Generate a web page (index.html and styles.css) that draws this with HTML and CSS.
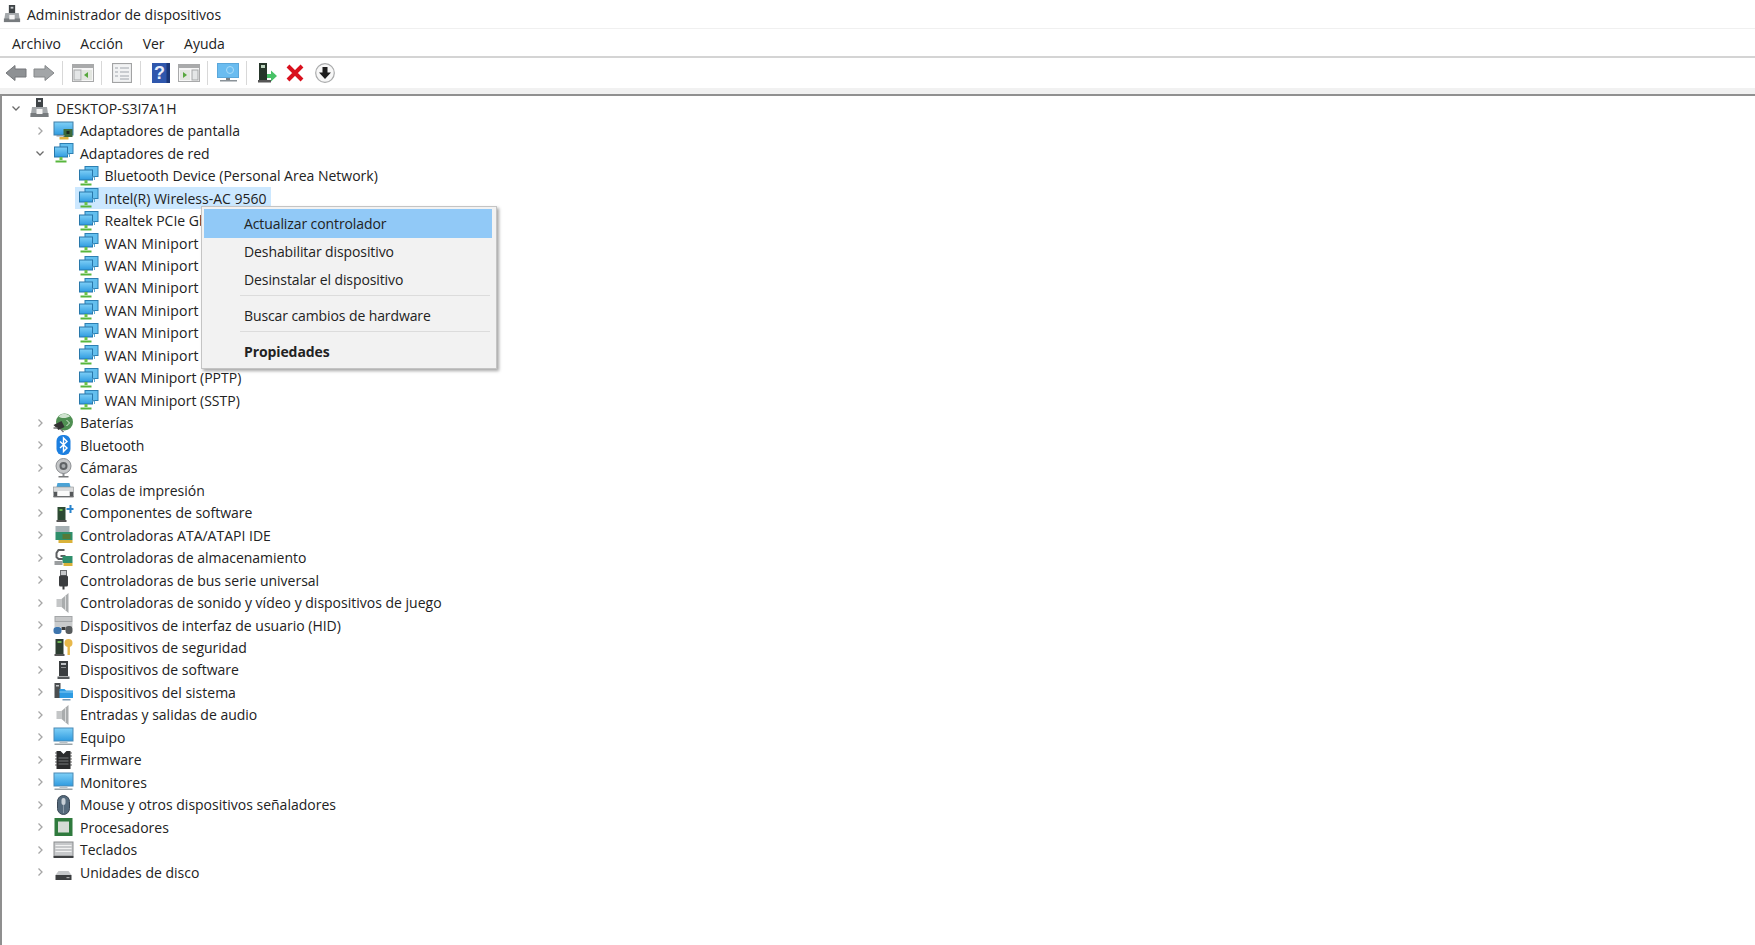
FILE: index.html
```html
<!DOCTYPE html>
<html lang="es">
<head>
<meta charset="utf-8">
<title>Administrador de dispositivos</title>
<link rel="stylesheet" href="styles.css">
</head>
<body>
<svg class="sprite" width="0" height="0" aria-hidden="true">
<defs>
<linearGradient id="scr" x1="0" y1="0" x2="0" y2="1"><stop offset="0" stop-color="#7fd0f7"/><stop offset="1" stop-color="#2f9be0"/></linearGradient>
<symbol id="i-computer" viewBox="0 0 20 20"><rect x="6.500" y="0" width="7" height="10" fill="#3f4447"/><rect x="8.500" y="2" width="3" height="2" fill="#c8ccd0"/><path d="M2.500 9h15l1.500 10H1z" fill="#a4a8ab"/><rect x="1" y="15" width="18" height="4" fill="#777b7e"/><rect x="7" y="11" width="6" height="5" fill="#f4f4f4"/></symbol>
<symbol id="i-display" viewBox="0 0 20 20"><rect x="0.500" y="1" width="19" height="13" fill="url(#scr)" stroke="#3f7ea8"/><rect x="10" y="8" width="9" height="8" fill="#3d6b3a"/><rect x="13" y="10" width="3" height="3" fill="#1d2a1d"/><rect x="6" y="16" width="9" height="2.500" fill="#e2b33d"/><rect x="3" y="14" width="8" height="1.500" fill="#8b9aa3"/></symbol>
<symbol id="i-net" viewBox="0 0 20 20"><rect x="6.500" y="0.500" width="13" height="10" fill="#63bfee" stroke="#2d7fb2"/><rect x="1" y="4" width="13" height="10" fill="url(#scr)" stroke="#2877aa"/><rect x="6" y="14" width="3" height="3" fill="#6cc24a"/><path d="M2 18.500h11" stroke="#58b63d" stroke-width="2"/><path d="M13 11h3v3" stroke="#5aaad6" fill="none"/></symbol>
<symbol id="i-battery" viewBox="0 0 20 20"><circle cx="11" cy="9" r="8.500" fill="#4f8f52"/><path d="M5 3.500c4-4 9-3 11.500 0-3 1.500-8 2.500-11.500 0z" fill="#cfe3cf"/><path d="M0 12l8-4 3 6-6 3z" fill="#333"/><path d="M0 15h4M7 16l3 3" stroke="#777" stroke-width="1.500"/><path d="M13 7l3 3-3 3" stroke="#d8ecd8" fill="none"/></symbol>
<symbol id="i-bt" viewBox="0 0 20 20"><rect x="3" y="0" width="14" height="20" rx="6" fill="#1c7fe0"/><path d="M6.500 6.500l7 6.500-3.500 3.500V3l3.500 3.500-7 6.500" stroke="#fff" stroke-width="1.400" fill="none"/></symbol>
<symbol id="i-cam" viewBox="0 0 20 20"><circle cx="10" cy="8" r="7.500" fill="#c4c6c8" stroke="#8c8f92"/><circle cx="10" cy="8" r="4" fill="#5f6366"/><circle cx="10" cy="8" r="2" fill="#a6aaad"/><path d="M10 15v3" stroke="#8c8f92" stroke-width="2"/><rect x="5" y="18" width="10" height="1.500" fill="#77797b"/></symbol>
<symbol id="i-printer" viewBox="0 0 20 20"><path d="M4 3h12l1 4H3z" fill="#4ba3d6"/><rect x="0" y="7" width="20" height="5" fill="#d9dadb" stroke="#8d8f91" stroke-width=".6"/><rect x="0" y="12" width="4" height="5" fill="#55585a"/><rect x="16" y="12" width="4" height="5" fill="#55585a"/><rect x="4" y="11" width="12" height="5" fill="#fafafa"/><rect x="0" y="16" width="20" height="1.400" fill="#6b6d6f"/></symbol>
<symbol id="i-comp" viewBox="0 0 20 20"><rect x="4" y="4" width="8" height="14" fill="#2d4a33"/><rect x="6" y="6" width="3" height="2" fill="#68b34f"/><rect x="3" y="17" width="10" height="2" fill="#555"/><path d="M13 5h3V2h2v3h2v2h-2v3h-2V7h-3z" fill="#2a84cc"/></symbol>
<symbol id="i-ata" viewBox="0 0 20 20"><rect x="2" y="1" width="14" height="6" fill="#a6b0b4"/><rect x="2" y="7" width="17" height="8" fill="#2f8f6c"/><rect x="9" y="9" width="8" height="5" fill="#567a37"/><rect x="5" y="15" width="14" height="3" fill="#d9b23a"/></symbol>
<symbol id="i-store" viewBox="0 0 20 20"><path d="M11 2H5L3 5v4l2 2h6V8H7" stroke="#5c5f61" stroke-width="2" fill="none"/><rect x="9" y="8" width="10" height="7" fill="#2f8f6c"/><rect x="1" y="13" width="8" height="4" fill="#9a9d9f"/><rect x="10" y="15" width="9" height="3" fill="#d9b23a"/></symbol>
<symbol id="i-usb" viewBox="0 0 20 20"><rect x="7" y="0.500" width="6" height="5" fill="#c7c9cb" stroke="#6a6c6e"/><rect x="5.500" y="5.500" width="9" height="11" rx="1.500" fill="#3b3d3f"/><rect x="9" y="16" width="2" height="3.500" fill="#3b3d3f"/></symbol>
<symbol id="i-sound" viewBox="0 0 20 20"><rect x="3" y="6" width="5" height="8" fill="#c4c6c7"/><path d="M8 6l7-6v20l-7-6z" fill="#a9acad"/><path d="M12 3v14" stroke="#d9dadb"/></symbol>
<symbol id="i-hid" viewBox="0 0 20 20"><rect x="1" y="1" width="18" height="6" fill="#a3a6a8"/><path d="M2 3h16M2 5h16" stroke="#e8e8e8"/><rect x="1" y="7" width="18" height="5" fill="#c9cbcc"/><rect x="0" y="12" width="8" height="7" rx="3" fill="#3d75ad"/><rect x="12" y="11" width="7" height="8" rx="3" fill="#565a5c"/><rect x="8" y="12" width="4" height="3" fill="#3a3c3d"/></symbol>
<symbol id="i-sec" viewBox="0 0 20 20"><rect x="2" y="2" width="8" height="15" fill="#2c3c30"/><rect x="4" y="4" width="4" height="2" fill="#6cb452"/><rect x="1" y="17" width="10" height="2" fill="#555"/><circle cx="15" cy="6" r="4" fill="#e8b84a"/><rect x="14" y="9" width="2.400" height="9" fill="#e8b84a"/></symbol>
<symbol id="i-soft" viewBox="0 0 20 20"><rect x="5.500" y="1" width="9" height="15" fill="#3a3d3f"/><rect x="7.500" y="3" width="5" height="2" fill="#c0c3c5"/><rect x="7.500" y="7" width="5" height="1" fill="#8e9193"/><rect x="4" y="16.500" width="12" height="2.500" fill="#55585a"/></symbol>
<symbol id="i-sys" viewBox="0 0 20 20"><rect x="1" y="1" width="6" height="15" fill="#4b4e50"/><rect x="2.500" y="3" width="3" height="1.500" fill="#c4c6c8"/><path d="M6 7h5l1.500 1.500H19.500V16H6z" fill="#2d9be2"/><path d="M6 10h13.500" stroke="#86cdf5"/><rect x="9" y="17" width="8" height="1.500" fill="#7a9bb5"/></symbol>
<symbol id="i-mon" viewBox="0 0 20 20"><rect x="0.500" y="1" width="19" height="13" fill="url(#scr)" stroke="#4a8ab5"/><rect x="6" y="14.500" width="8" height="1.500" fill="#b8c0c5"/><rect x="1" y="16.500" width="18" height="1.500" fill="#9aa3a8"/></symbol>
<symbol id="i-fw" viewBox="0 0 20 20"><rect x="3" y="1" width="14" height="18" fill="#2b2c2d"/><path d="M3 3h-1M3 6h-1M3 9h-1M3 12h-1M3 15h-1M18 3h-1M18 6h-1M18 9h-1M18 12h-1M18 15h-1" stroke="#333" stroke-width="1.500"/><path d="M7 1l3 3 3-3z" fill="#fff"/><path d="M5 8h10M5 11h10M5 14h10" stroke="#77797b"/></symbol>
<symbol id="i-mouse" viewBox="0 0 20 20"><rect x="4" y="0.500" width="12" height="19" rx="6" fill="#556a7c" stroke="#3a4856"/><rect x="8" y="3" width="4" height="7" rx="2" fill="#c9d1d8"/><path d="M10 10v8" stroke="#8b9aa8"/></symbol>
<symbol id="i-cpu" viewBox="0 0 20 20"><rect x="1" y="1" width="18" height="18" fill="#2f7a3d"/><rect x="4.500" y="4.500" width="11" height="11" fill="#d6dcd6"/></symbol>
<symbol id="i-kbd" viewBox="0 0 20 20"><rect x="0.500" y="2" width="19" height="14" fill="#c7c9cb" stroke="#8b8d8f"/><path d="M2 5.500h16M2 8.500h16M2 11.500h16" stroke="#f2f2f2"/><rect x="0" y="16" width="20" height="2" fill="#3f4143"/></symbol>
<symbol id="i-disk" viewBox="0 0 20 20"><path d="M5 9h10l3 4H2z" fill="#c6c8ca"/><rect x="2" y="13" width="16" height="5" fill="#3c3e40"/><rect x="13" y="15" width="3" height="1.200" fill="#aaa"/></symbol>
<symbol id="t-back" viewBox="0 0 22 18"><path d="M1 9L10 1.500V5h11v8H10v3.500z" fill="#8e9194" stroke="#74777a"/></symbol>
<symbol id="t-fwd" viewBox="0 0 22 18"><path d="M21 9L12 1.500V5H1v8h11v3.500z" fill="#a3a6a8" stroke="#85888a"/></symbol>
<symbol id="t-win1" viewBox="0 0 22 18"><rect x="0.500" y="0.500" width="21" height="17" fill="#f6f6f6" stroke="#a8a9aa"/><rect x="1" y="1" width="20" height="3" fill="#a9aaab"/><rect x="2" y="6" width="7" height="10" fill="#e4e6e7" stroke="#a6a8a9"/><rect x="10" y="6" width="10" height="10" fill="#e3e6e0"/><path d="M16 8v6l-4-3z" fill="#58a83e"/></symbol>
<symbol id="t-list" viewBox="0 0 20 20"><rect x="0.500" y="0.500" width="19" height="19" fill="#f2f3f4" stroke="#a2a3a4" stroke-width="1.200"/><path d="M3 5h3M3 9h3M3 13h3M8 5h9M8 9h9M8 13h9M8 16h9" stroke="#bcc0c3" stroke-width="1.300"/></symbol>
<symbol id="t-help" viewBox="0 0 18 20"><rect x="0" y="0" width="18" height="20" fill="#2f57ad"/><rect x="14.500" y="0" width="3.500" height="20" fill="#1c3879"/><text x="7.500" y="16" font-family="Liberation Sans, sans-serif" font-size="18" font-weight="700" fill="#e9eefa" text-anchor="middle">?</text></symbol>
<symbol id="t-win2" viewBox="0 0 22 18"><rect x="0.500" y="0.500" width="21" height="17" fill="#f6f6f6" stroke="#a8a9aa"/><rect x="1" y="1" width="20" height="3" fill="#a9aaab"/><rect x="2" y="6" width="10" height="10" fill="#e3e6e0"/><path d="M5 8v6l4-3z" fill="#58a83e"/><rect x="14" y="6" width="6" height="10" fill="#e4e6e7" stroke="#a6a8a9"/></symbol>
<symbol id="t-mon" viewBox="0 0 22 20"><rect x="0.500" y="0.500" width="21" height="14" fill="#6abcf0" stroke="#5ba7da"/><circle cx="13" cy="7" r="3.500" fill="none" stroke="#a9dcf9"/><rect x="9" y="15" width="4" height="2" fill="#7a8288"/><rect x="3" y="17" width="17" height="1.500" fill="#8a9298"/></symbol>
<symbol id="t-inst" viewBox="0 0 22 20"><rect x="3" y="0" width="8" height="17" fill="#26362a"/><rect x="5" y="2" width="4" height="3" fill="#bcd4be"/><rect x="2" y="17" width="13" height="2.500" fill="#555"/><path d="M11 11h4V7.500l6 5.500-6 5.500V15h-4z" fill="#48c267"/></symbol>
<symbol id="t-x" viewBox="0 0 18 18"><path d="M2 2l14 14M16 2L2 16" stroke="#d9101d" stroke-width="4"/></symbol>
<symbol id="t-down" viewBox="0 0 20 20"><circle cx="10" cy="10" r="9.300" fill="#f7f7f7" stroke="#a9aaab" stroke-width="1.200"/><path d="M7.500 4h5v5.500H16L10 16 4 9.500h3.500z" fill="#1e1e1e"/></symbol>
<symbol id="c-right" viewBox="0 0 10 10"><path d="M3.500 1.500L7 5 3.500 8.500" fill="none" stroke="#a6a6a6" stroke-width="1.300"/></symbol>
<symbol id="c-down" viewBox="0 0 10 10"><path d="M1.500 3.500L5 7l3.500-3.500" fill="none" stroke="#6b6b6b" stroke-width="1.300"/></symbol>
</defs>
</svg>

<div class="window">
  <header class="titlebar">
    <svg class="title-icon"><use href="#i-computer"/></svg>
    <span>Administrador de dispositivos</span>
  </header>
  <nav class="menubar">
    <span class="menu-item">Archivo</span>
    <span class="menu-item">Acción</span>
    <span class="menu-item">Ver</span>
    <span class="menu-item">Ayuda</span>
  </nav>
  <div class="toolbar">
    <span class="tool"><svg class="w22"><use href="#t-back"/></svg></span>
    <span class="tool"><svg class="w22"><use href="#t-fwd"/></svg></span>
    <i class="sep"></i>
    <span class="tool"><svg class="w22"><use href="#t-win1"/></svg></span>
    <i class="sep"></i>
    <span class="tool"><svg class="w20"><use href="#t-list"/></svg></span>
    <i class="sep"></i>
    <span class="tool"><svg class="w18"><use href="#t-help"/></svg></span>
    <span class="tool"><svg class="w22"><use href="#t-win2"/></svg></span>
    <i class="sep"></i>
    <span class="tool"><svg class="w22"><use href="#t-mon"/></svg></span>
    <i class="sep"></i>
    <span class="tool"><svg class="w22"><use href="#t-inst"/></svg></span>
    <span class="tool"><svg class="w18"><use href="#t-x"/></svg></span>
    <span class="tool tool-last"><svg class="w20"><use href="#t-down"/></svg></span>
  </div>

  <main class="tree">
    <div class="row lv0"><svg class="chev"><use href="#c-down"/></svg><svg class="ico"><use href="#i-computer"/></svg><span class="lab">DESKTOP-S3I7A1H</span></div>
    <div class="row lv1"><svg class="chev"><use href="#c-right"/></svg><svg class="ico"><use href="#i-display"/></svg><span class="lab">Adaptadores de pantalla</span></div>
    <div class="row lv1"><svg class="chev"><use href="#c-down"/></svg><svg class="ico"><use href="#i-net"/></svg><span class="lab">Adaptadores de red</span></div>
    <div class="row lv2"><svg class="ico"><use href="#i-net"/></svg><span class="lab">Bluetooth Device (Personal Area Network)</span></div>
    <div class="row lv2"><span class="sel"><svg class="ico"><use href="#i-net"/></svg><span class="lab">Intel(R) Wireless-AC 9560</span></span></div>
    <div class="row lv2"><svg class="ico"><use href="#i-net"/></svg><span class="lab">Realtek PCIe GbE Family Controller</span></div>
    <div class="row lv2 under"><svg class="ico"><use href="#i-net"/></svg><span class="lab">WAN Miniport (IKEv2)</span></div>
    <div class="row lv2 under"><svg class="ico"><use href="#i-net"/></svg><span class="lab">WAN Miniport (IP)</span></div>
    <div class="row lv2 under"><svg class="ico"><use href="#i-net"/></svg><span class="lab">WAN Miniport (IPv6)</span></div>
    <div class="row lv2 under"><svg class="ico"><use href="#i-net"/></svg><span class="lab">WAN Miniport (L2TP)</span></div>
    <div class="row lv2 under"><svg class="ico"><use href="#i-net"/></svg><span class="lab">WAN Miniport (Network Monitor)</span></div>
    <div class="row lv2 under"><svg class="ico"><use href="#i-net"/></svg><span class="lab">WAN Miniport (PPPOE)</span></div>
    <div class="row lv2"><svg class="ico"><use href="#i-net"/></svg><span class="lab">WAN Miniport (PPTP)</span></div>
    <div class="row lv2"><svg class="ico"><use href="#i-net"/></svg><span class="lab">WAN Miniport (SSTP)</span></div>
    <div class="row lv1"><svg class="chev"><use href="#c-right"/></svg><svg class="ico"><use href="#i-battery"/></svg><span class="lab">Baterías</span></div>
    <div class="row lv1"><svg class="chev"><use href="#c-right"/></svg><svg class="ico"><use href="#i-bt"/></svg><span class="lab">Bluetooth</span></div>
    <div class="row lv1"><svg class="chev"><use href="#c-right"/></svg><svg class="ico"><use href="#i-cam"/></svg><span class="lab">Cámaras</span></div>
    <div class="row lv1"><svg class="chev"><use href="#c-right"/></svg><svg class="ico"><use href="#i-printer"/></svg><span class="lab">Colas de impresión</span></div>
    <div class="row lv1"><svg class="chev"><use href="#c-right"/></svg><svg class="ico"><use href="#i-comp"/></svg><span class="lab">Componentes de software</span></div>
    <div class="row lv1"><svg class="chev"><use href="#c-right"/></svg><svg class="ico"><use href="#i-ata"/></svg><span class="lab">Controladoras ATA/ATAPI IDE</span></div>
    <div class="row lv1"><svg class="chev"><use href="#c-right"/></svg><svg class="ico"><use href="#i-store"/></svg><span class="lab">Controladoras de almacenamiento</span></div>
    <div class="row lv1"><svg class="chev"><use href="#c-right"/></svg><svg class="ico"><use href="#i-usb"/></svg><span class="lab">Controladoras de bus serie universal</span></div>
    <div class="row lv1"><svg class="chev"><use href="#c-right"/></svg><svg class="ico"><use href="#i-sound"/></svg><span class="lab">Controladoras de sonido y vídeo y dispositivos de juego</span></div>
    <div class="row lv1"><svg class="chev"><use href="#c-right"/></svg><svg class="ico"><use href="#i-hid"/></svg><span class="lab">Dispositivos de interfaz de usuario (HID)</span></div>
    <div class="row lv1"><svg class="chev"><use href="#c-right"/></svg><svg class="ico"><use href="#i-sec"/></svg><span class="lab">Dispositivos de seguridad</span></div>
    <div class="row lv1"><svg class="chev"><use href="#c-right"/></svg><svg class="ico"><use href="#i-soft"/></svg><span class="lab">Dispositivos de software</span></div>
    <div class="row lv1"><svg class="chev"><use href="#c-right"/></svg><svg class="ico"><use href="#i-sys"/></svg><span class="lab">Dispositivos del sistema</span></div>
    <div class="row lv1"><svg class="chev"><use href="#c-right"/></svg><svg class="ico"><use href="#i-sound"/></svg><span class="lab">Entradas y salidas de audio</span></div>
    <div class="row lv1"><svg class="chev"><use href="#c-right"/></svg><svg class="ico"><use href="#i-mon"/></svg><span class="lab">Equipo</span></div>
    <div class="row lv1"><svg class="chev"><use href="#c-right"/></svg><svg class="ico"><use href="#i-fw"/></svg><span class="lab">Firmware</span></div>
    <div class="row lv1"><svg class="chev"><use href="#c-right"/></svg><svg class="ico"><use href="#i-mon"/></svg><span class="lab">Monitores</span></div>
    <div class="row lv1"><svg class="chev"><use href="#c-right"/></svg><svg class="ico"><use href="#i-mouse"/></svg><span class="lab">Mouse y otros dispositivos señaladores</span></div>
    <div class="row lv1"><svg class="chev"><use href="#c-right"/></svg><svg class="ico"><use href="#i-cpu"/></svg><span class="lab">Procesadores</span></div>
    <div class="row lv1"><svg class="chev"><use href="#c-right"/></svg><svg class="ico"><use href="#i-kbd"/></svg><span class="lab">Teclados</span></div>
    <div class="row lv1"><svg class="chev"><use href="#c-right"/></svg><svg class="ico"><use href="#i-disk"/></svg><span class="lab">Unidades de disco</span></div>
  </main>

  <div class="ctx">
    <div class="ctx-item active">Actualizar controlador</div>
    <div class="ctx-item">Deshabilitar dispositivo</div>
    <div class="ctx-item">Desinstalar el dispositivo</div>
    <div class="ctx-sep"></div>
    <div class="ctx-item">Buscar cambios de hardware</div>
    <div class="ctx-sep"></div>
    <div class="ctx-item bold">Propiedades</div>
  </div>
</div>
</body>
</html>
```
FILE: styles.css
```css
* { box-sizing: border-box; }
html, body { margin: 0; height: 100%; }
body {
  background: #fff;
  color: #222;
  font-family: "Open Sans", "Noto Sans", sans-serif;
  font-size: 14px;
  overflow: hidden;
}
.sprite { position: absolute; }
.window {
  position: relative;
  display: flex;
  flex-direction: column;
  height: 945px;
}
.titlebar {
  display: flex;
  align-items: center;
  gap: 6px;
  height: 29px;
  padding-left: 3px;
  border-bottom: 1px solid #f0f0f0;
}
.title-icon { width: 18px; height: 20px; }
.menubar {
  display: flex;
  height: 29px;
  align-items: center;
  padding: 1px 0 0 12px;
  border-bottom: 2px solid #d4d4d4;
}
.menu-item { margin-right: 19.5px; }
.toolbar {
  display: flex;
  align-items: center;
  height: 30px;
  padding-left: 2px;
}
.tool {
  display: flex;
  align-items: center;
  justify-content: center;
  width: 28px;
  height: 22px;
}
.tool-last { margin-left: 2px; }
.tool svg { height: 20px; }
.w22 { width: 22px; }
.w20 { width: 20px; }
.w18 { width: 18px; }
.sep {
  width: 1px;
  height: 24px;
  margin: 0 6px 0 4px;
  background: #d8d8d8;
}
.tree {
  flex: 1;
  margin-top: 6px;
  padding-top: 1px;
  background: #fff;
  border-top: 2px solid #909090;
  border-left: 2px solid #8f8f8f;
  box-shadow: 0 -6px 0 #f1f1f1;
}
.row {
  display: flex;
  align-items: center;
  height: 22.48px;
  white-space: nowrap;
}
.chev { width: 10px; height: 10px; flex: none; }
.ico { width: 21px; height: 20px; flex: none; margin-right: 6px; }
.lv0 { padding-left: 9px; }
.lv0 .chev { margin-right: 8px; }
.lv1 { padding-left: 33px; }
.lv1 .chev { margin-right: 8px; }
.lv2 { padding-left: 75.500px; }
.under .lab { letter-spacing: .2px; }
.sel {
  display: flex;
  align-items: center;
  height: 22px;
  margin-left: -2.500px;
  padding: 0 4px 0 2.500px;
  background: #cce8ff;
}
.ctx {
  position: absolute;
  left: 201px;
  top: 206px;
  width: 296px;
  height: 163px;
  padding: 2px;
  background: #f2f2f2;
  border: 1px solid #c4c4c4;
  box-shadow: 2px 2px 3px rgba(0, 0, 0, .35);
  letter-spacing: -.1px;
}
.ctx-item {
  display: flex;
  align-items: center;
  height: 27.500px;
  padding-left: 40px;
}
.ctx-item.active { background: #91c9f7; height: 29px; margin-right: 2px; }
.ctx-item.bold { font-weight: 700; }
.ctx-sep {
  height: 1px;
  margin: 2px 4px 5.500px 36px;
  background: #dcdcdc;
}
```
